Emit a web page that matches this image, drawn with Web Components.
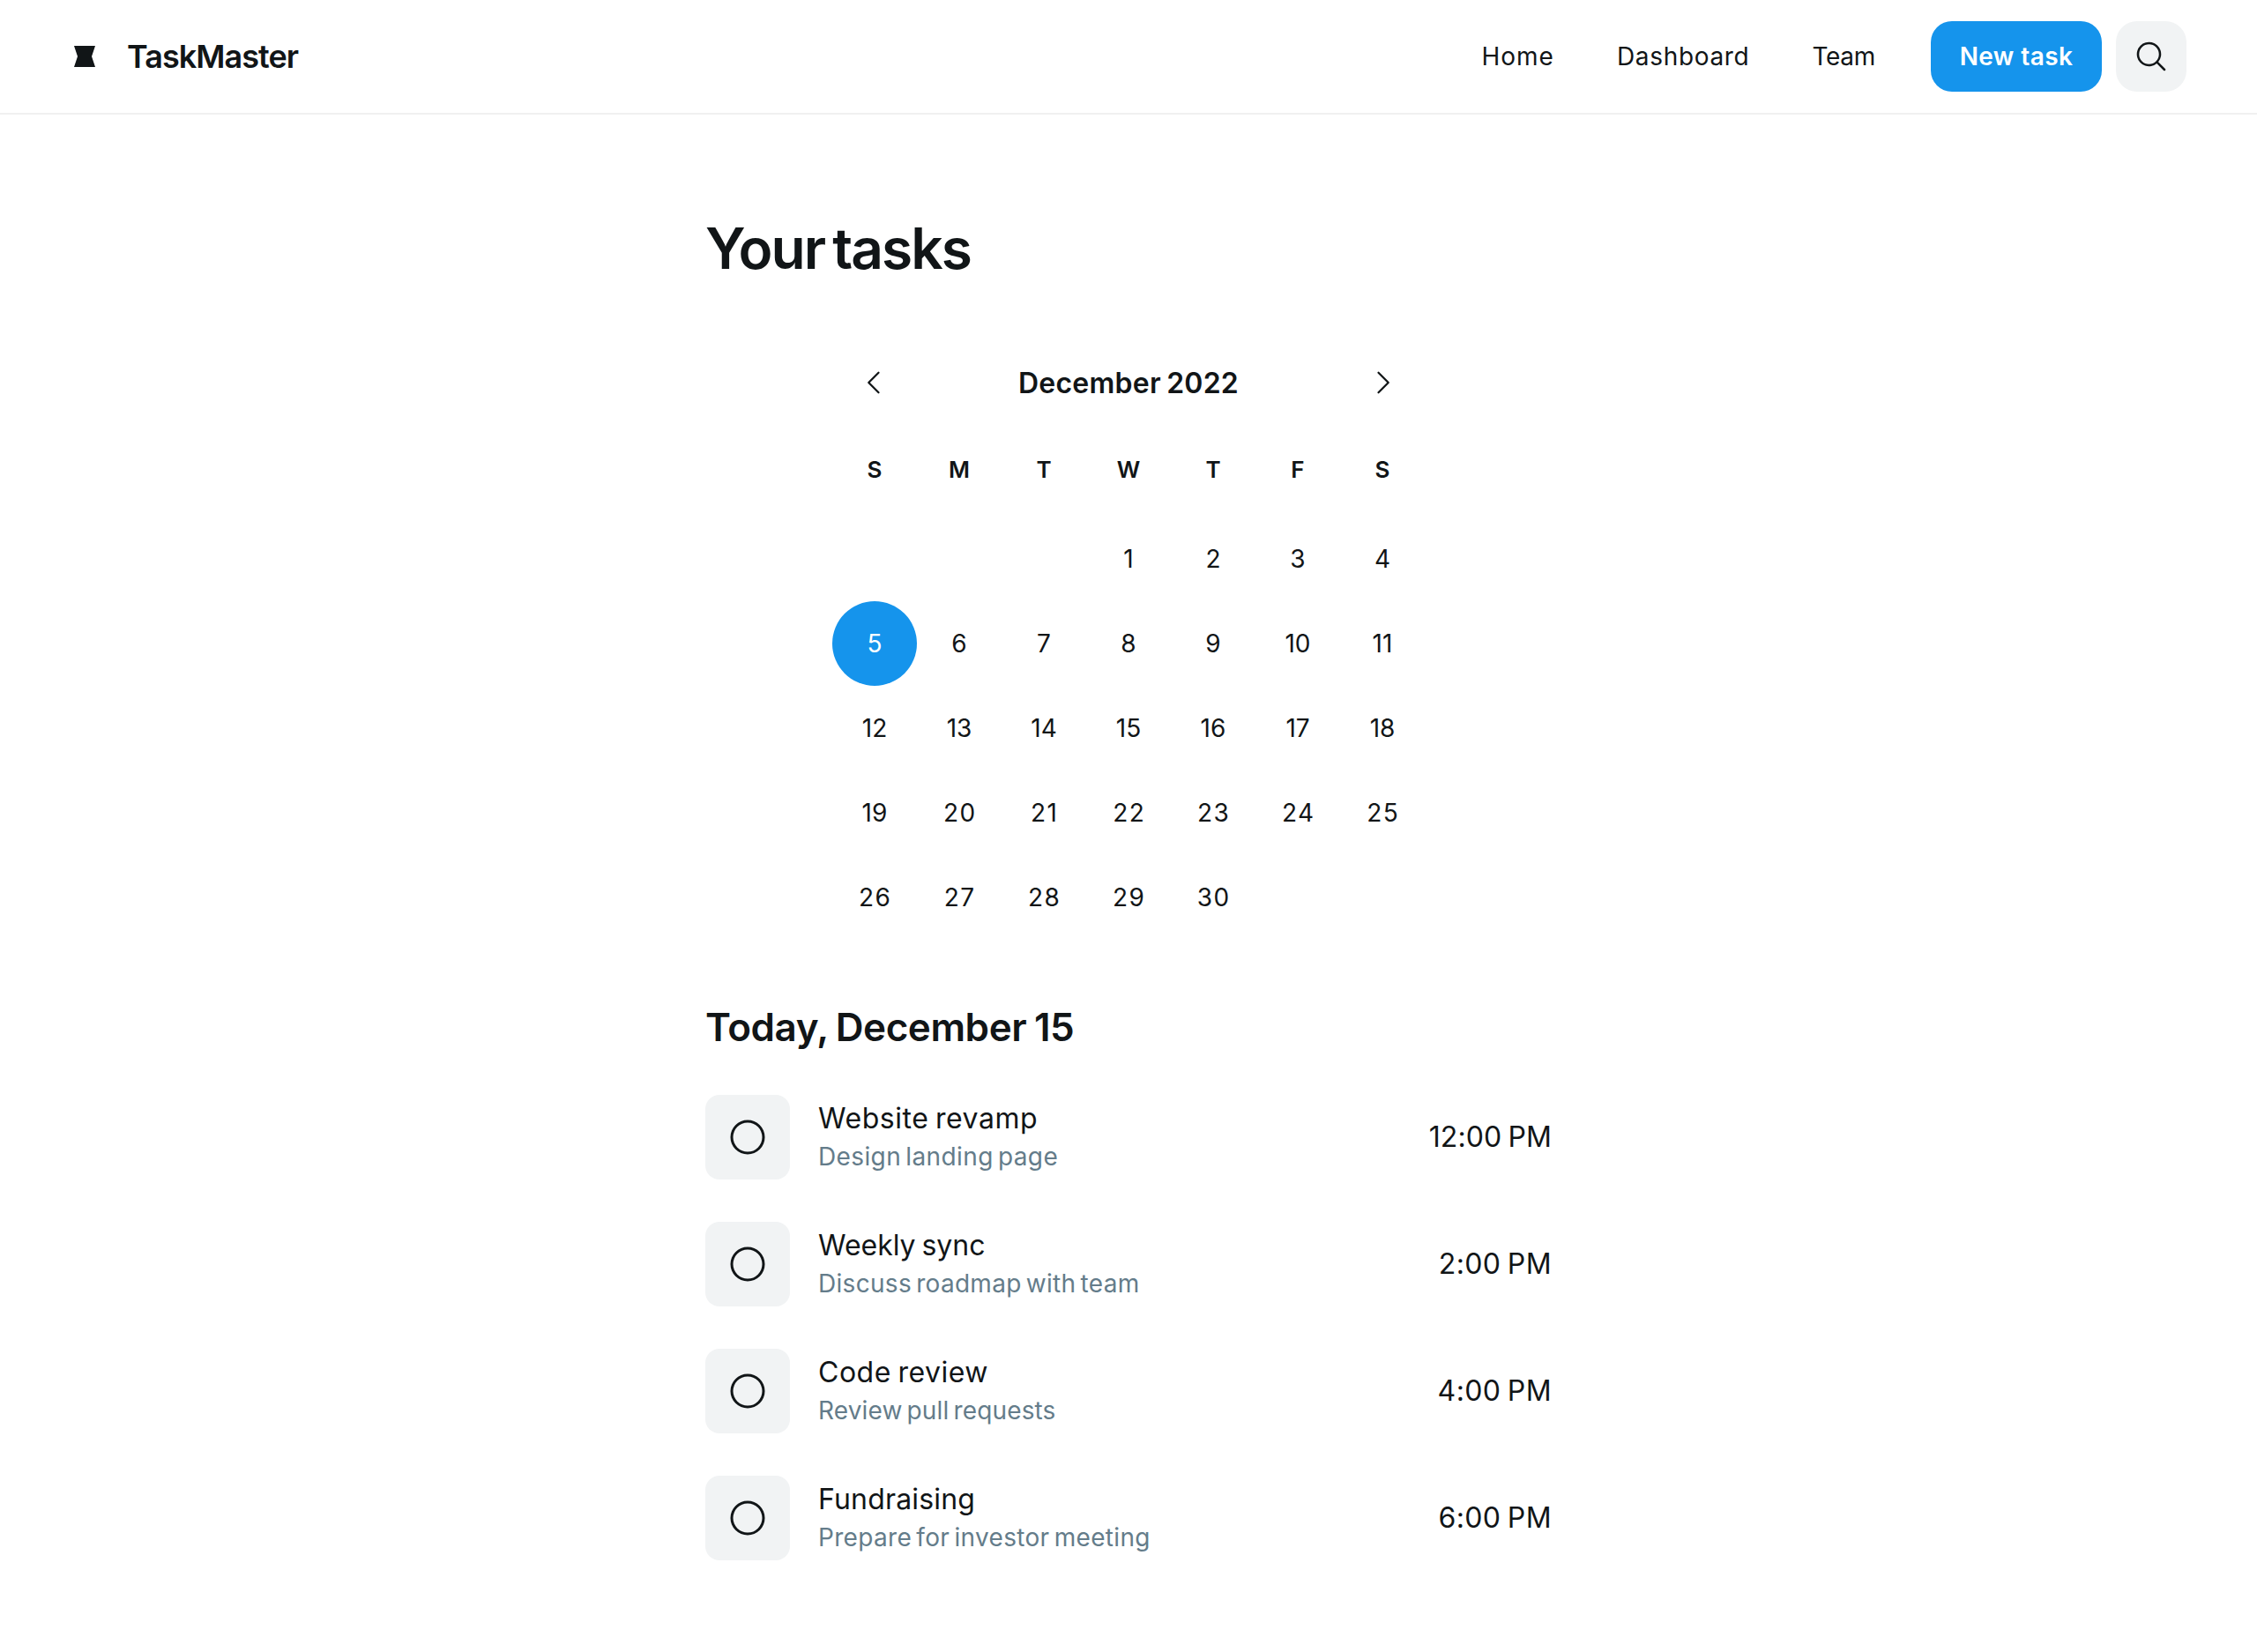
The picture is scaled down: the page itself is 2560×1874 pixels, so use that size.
<!DOCTYPE html>
<html lang="en">
<head>
<meta charset="utf-8">
<title>TaskMaster</title>
<style>
  html, body { margin: 0; background: #fff; }
  body {
    font-family: Inter, "Liberation Sans", sans-serif;
    color: #111517;
    --accent: #1594ec; --soft: #f1f3f4; --muted: #647c8a; --line: #f0f0f0;
  }
</style>
</head>
<body>
<task-app></task-app>

<script>
const define = (name, markup, setup) => {
  const template = document.createElement('template');
  template.innerHTML = markup;
  customElements.define(name, class extends HTMLElement {
    connectedCallback() {
      if (this.shadowRoot) return;
      const root = this.attachShadow({ mode: 'open' });
      root.append(template.content.cloneNode(true));
      if (setup) setup(this, root);
    }
  });
};

/* Filled glyphs on a 256-unit grid */
const ICONS = {
  search: 'M229.66,218.34l-50.07-50.06a88.11,88.11,0,1,0-11.31,11.31l50.06,50.07a8,8,0,0,0,11.32-11.32ZM40,112a72,72,0,1,1,72,72A72.08,72.08,0,0,1,40,112Z',
  left: 'M165.66,202.34a8,8,0,0,1-11.32,11.32l-80-80a8,8,0,0,1,0-11.32l80-80a8,8,0,0,1,11.32,11.32L91.31,128Z',
  right: 'M181.66,133.66l-80,80a8,8,0,0,1-11.32-11.32L164.69,128,90.34,53.66a8,8,0,0,1,11.32-11.32l80,80A8,8,0,0,1,181.66,133.66Z',
  circle: 'M128,24A104,104,0,1,0,232,128,104.11,104.11,0,0,0,128,24Zm0,192a88,88,0,1,1,88-88A88.1,88.1,0,0,1,128,216Z'
};

define('app-icon', `
  <style>
    :host { display: block; flex: none; }
    svg { display: block; fill: currentColor; }
  </style>
  <svg viewBox="0 0 256 256"><path/></svg>`, (host, root) => {
  const size = host.getAttribute('size');
  const svg = root.querySelector('svg');
  svg.setAttribute('width', size);
  svg.setAttribute('height', size);
  root.querySelector('path').setAttribute('d', ICONS[host.getAttribute('name')]);
});

define('app-brand', `
  <style>
    :host { display: flex; align-items: center; gap: 32px; }
    svg { display: block; }
    span { font-size: 36px; font-weight: 600; line-height: 46px; letter-spacing: -.96px; }
  </style>
  <svg width="32" height="32" viewBox="0 0 48 48"><path fill="currentColor" d="M6 6H42L36 24L42 42H6L12 24L6 6Z"/></svg>
  <span><slot></slot></span>`);

define('nav-link', `
  <style>
    :host { display: block; font-size: 28px; font-weight: 400; line-height: 42px; letter-spacing: var(--track, 0); }
  </style>
  <slot></slot>`);

define('primary-button', `
  <style>
    :host { display: flex; align-items: center; justify-content: center; width: 194px; height: 80px;
      border-radius: 24px; background: var(--accent); color: #fff; font-size: 28px; font-weight: 600;
      line-height: 42px; letter-spacing: .42px; }
  </style>
  <slot></slot>`);

define('icon-button', `
  <style>
    :host { display: flex; align-items: center; justify-content: center; width: 80px; height: 80px;
      border-radius: 24px; background: var(--soft); }
  </style>
  <slot></slot>`);

define('app-header', `
  <style>
    :host { display: flex; align-items: center; justify-content: space-between; box-sizing: border-box;
      height: 130px; padding: 0 80px; border-bottom: 2px solid var(--line); }
    .side { display: flex; align-items: center; gap: 63px; }
    nav { display: flex; gap: 71px; }
    .actions { display: flex; gap: 16px; }
  </style>
  <app-brand>TaskMaster</app-brand>
  <div class="side">
    <nav>
      <nav-link style="--track:1px">Home</nav-link>
      <nav-link style="--track:.68px">Dashboard</nav-link>
      <nav-link style="--track:-.3px">Team</nav-link>
    </nav>
    <div class="actions">
      <primary-button>New task</primary-button>
      <icon-button><app-icon name="search" size="40"></app-icon></icon-button>
    </div>
  </div>`);

define('month-calendar', `
  <style>
    :host { display: block; width: 672px; margin: 0 auto; }
    header { display: flex; align-items: center; justify-content: space-between; height: 80px; }
    .arrow { display: flex; align-items: center; justify-content: center; width: 96px; height: 80px; }
    h2 { margin: 0; padding-top: 2px; font-size: 32px; font-weight: 600; line-height: 40px; letter-spacing: .24px; word-spacing: -2px; }
    .grid { display: grid; grid-template-columns: repeat(7, 96px); text-align: center; }
    .name { box-sizing: border-box; height: 112px; padding-top: 5px; line-height: 107px; font-size: 26px; font-weight: 600; }
    .day { height: 96px; line-height: 96px; font-size: 28px; font-weight: 400; border-radius: 50%; }
    .wide { letter-spacing: 1.4px; text-indent: 1.4px; }
    .day[aria-current] { background: var(--accent); color: #fff; }
  </style>
  <header>
    <div class="arrow"><app-icon name="left" size="36"></app-icon></div>
    <h2><slot></slot></h2>
    <div class="arrow"><app-icon name="right" size="36"></app-icon></div>
  </header>
  <div class="grid"></div>`, (host, root) => {
  const grid = root.querySelector('.grid');
  const add = (cls, text) => {
    const cell = document.createElement('div');
    cell.className = cls;
    cell.textContent = text;
    grid.append(cell);
    return cell;
  };
  for (const name of 'SMTWTFS') add('name', name);
  for (let day = 1; day <= Number(host.getAttribute('days')); day++) {
    const cell = add(day >= 20 ? 'day wide' : 'day', day);
    if (day === 1) cell.style.gridColumnStart = host.getAttribute('first');
    if (day === Number(host.getAttribute('selected'))) cell.setAttribute('aria-current', 'date');
  }
});

define('task-item', `
  <style>
    :host { display: flex; align-items: center; height: 144px; }
    .check { display: flex; align-items: center; justify-content: center; width: 96px; height: 96px;
      border-radius: 16px; background: var(--soft); margin-right: 32px; }
    .body { flex: 1; }
    .title { font-size: 32px; line-height: 44px; letter-spacing: var(--t, 0); word-spacing: -2px; }
    .note { font-size: 28px; line-height: 42px; color: var(--muted); letter-spacing: var(--n, 0); word-spacing: -3px; }
    .time { font-size: 32px; line-height: 48px; padding-bottom: 1px; letter-spacing: var(--c, .4px); word-spacing: -2px; }
  </style>
  <div class="check"><app-icon name="circle" size="48"></app-icon></div>
  <div class="body">
    <div class="title"><slot></slot></div>
    <div class="note"><slot name="note"></slot></div>
  </div>
  <div class="time"><slot name="time"></slot></div>`);

define('task-app', `
  <style>
    :host { display: block; }
    main { width: 960px; margin: 0 auto; padding-top: 112px; }
    h1 { margin: 0 0 72px; font-size: 64px; font-weight: 600; line-height: 80px; letter-spacing: -1.95px; word-spacing: -5px; }
    h3 { margin: 71px 0 25px; font-size: 44px; font-weight: 600; line-height: 56px; letter-spacing: -.43px; word-spacing: -2px; }
  </style>
  <app-header></app-header>
  <main>
    <h1>Your tasks</h1>
    <month-calendar first="4" days="30" selected="5">December 2022</month-calendar>
    <h3>Today, December 15</h3>
    <task-item style="--t:.54px;--n:.38px;--c:.1px">Website revamp<span slot="note">Design landing page</span><span slot="time">12:00 PM</span></task-item>
    <task-item style="--t:-.03px;--n:.3px">Weekly sync<span slot="note">Discuss roadmap with team</span><span slot="time">2:00 PM</span></task-item>
    <task-item style="--t:.52px;--n:.15px">Code review<span slot="note">Review pull requests</span><span slot="time">4:00 PM</span></task-item>
    <task-item style="--t:.18px;--n:.33px">Fundraising<span slot="note">Prepare for investor meeting</span><span slot="time">6:00 PM</span></task-item>
  </main>`);
</script>
</body>
</html>
